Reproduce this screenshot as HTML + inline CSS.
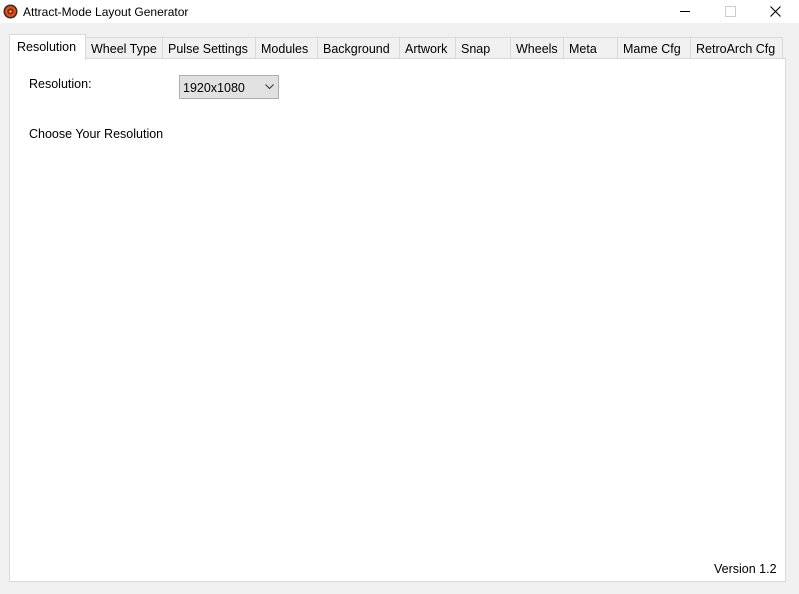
<!DOCTYPE html>
<html><head><style>
body{margin:0;width:799px;height:594px;background:#f0f0f0;font-family:"Liberation Sans",sans-serif;font-size:12.5px;color:#000;position:relative;overflow:hidden}
.tb{position:absolute;left:0;top:0;width:799px;height:23px;background:#fff}
.t{position:absolute;white-space:nowrap}
.tab{position:absolute;top:37px;height:21px;border:1px solid #d9d9d9;border-bottom:none;background:#f0f0f0;box-sizing:border-box;padding:4px 0 0 5px;white-space:nowrap}
.panel{position:absolute;left:9px;top:58px;width:777px;height:524px;background:#fff;border:1px solid #d9d9d9;box-sizing:border-box}
</style></head><body>
<div class="tb">
<svg style="position:absolute;left:3px;top:4px" width="15" height="15"><circle cx="7.5" cy="7.5" r="7" fill="#3a2a20"/><circle cx="7.5" cy="7.5" r="5.5" fill="#d9501e"/><circle cx="7.5" cy="7.5" r="3" fill="#8a1a10"/><circle cx="7.5" cy="7.5" r="1.3" fill="#f0c040"/></svg>
<div class="t" style="left:23px;top:5px;font-size:12px">Attract-Mode Layout Generator</div>
<div style="position:absolute;left:680px;top:11px;width:10px;height:1px;background:#000"></div>
<div style="position:absolute;left:725px;top:6px;width:9px;height:9px;border:1px solid #ccc"></div>
<svg style="position:absolute;left:770px;top:6px" width="11" height="11"><path d="M0.5 0.5L10.5 10.5M10.5 0.5L0.5 10.5" stroke="#000" stroke-width="1.1"/></svg>
</div>
<div class="panel"></div>
<div class="tab" style="left:85px;width:78px">Wheel Type</div>
<div class="tab" style="left:162px;width:94px">Pulse Settings</div>
<div class="tab" style="left:255px;width:63px">Modules</div>
<div class="tab" style="left:317px;width:83px">Background</div>
<div class="tab" style="left:399px;width:57px">Artwork</div>
<div class="tab" style="left:455px;width:56px">Snap</div>
<div class="tab" style="left:510px;width:54px">Wheels</div>
<div class="tab" style="left:563px;width:55px">Meta</div>
<div class="tab" style="left:617px;width:74px">Mame Cfg</div>
<div class="tab" style="left:690px;width:93px">RetroArch Cfg</div>
<div class="tab" style="left:9px;top:34px;width:77px;height:26px;background:#fff;padding:5px 0 0 7px">Resolution</div>
<div class="t" style="left:29px;top:77px">Resolution:</div>
<div style="position:absolute;left:179px;top:75px;width:100px;height:24px;background:#e1e1e1;border:1px solid #adadad;box-sizing:border-box"></div>
<div class="t" style="left:183px;top:81px">1920x1080</div>
<svg style="position:absolute;left:265px;top:84px" width="9" height="6"><path d="M0.5 0.5L4.5 4.5L8.5 0.5" stroke="#333" fill="none"/></svg>
<div class="t" style="left:29px;top:127px">Choose Your Resolution</div>
<div class="t" style="left:714px;top:562px">Version 1.2</div>
</body></html>
